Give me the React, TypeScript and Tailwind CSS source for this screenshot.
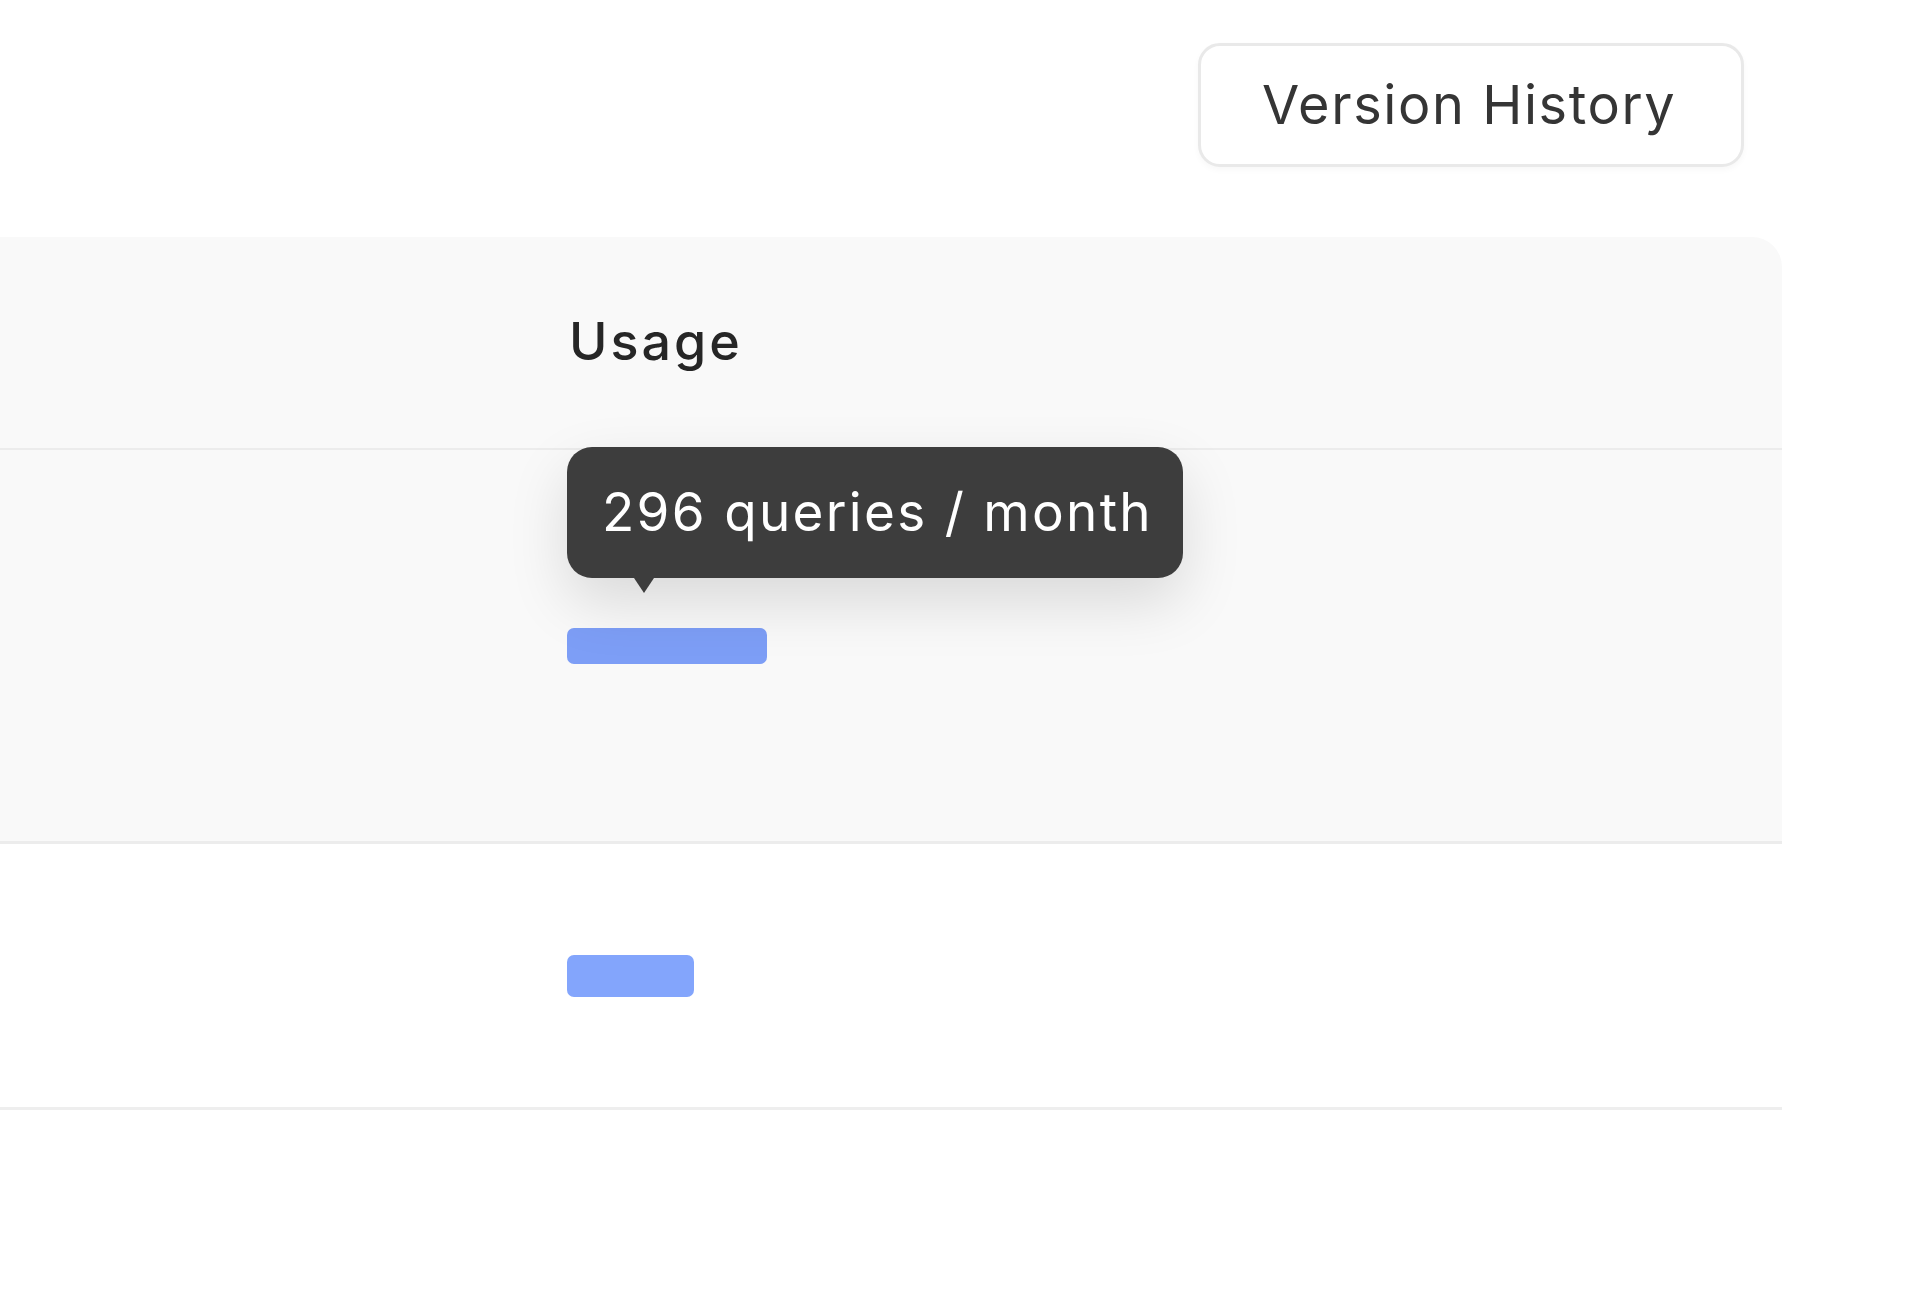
import React from 'react';

type Row = {
    id: string;
    width: number;
    height: number;
    color: string;
    tip?: string;
};

const rows: Row[] = [
    { id: 'a', width: 200, height: 36, color: '#7d9ef6', tip: '296 queries / month' },
    { id: 'b', width: 127, height: 42, color: '#83a5fc' },
];

const UsageBar: React.FC<{ row: Row }> = ({ row }) => (
    <div className="relative" style={{ width: row.width, height: row.height }}>
        <div className="w-full h-full rounded-[7px]" style={{ backgroundColor: row.color }} />
        {row.tip && (
            <div className="absolute left-0 bottom-[calc(100%+50px)]">
                <div className="relative">
                    <div className="h-[131px] w-[616px] flex items-center pl-[35px] rounded-[25px] bg-[#3d3d3d] text-white text-[53px] leading-none tracking-[2.3px] whitespace-nowrap shadow-[0_24px_60px_rgba(0,0,0,0.13)]">
                        {row.tip}
                    </div>
                    <div className="absolute left-[67px] top-full w-0 h-0 border-l-[10px] border-r-[10px] border-t-[15px] border-l-transparent border-r-transparent border-t-[#3d3d3d]" />
                </div>
            </div>
        )}
    </div>
);

export default function App() {
    return (
        <div className="w-[1920px] h-[1316px] bg-white overflow-hidden font-['Inter','Liberation_Sans',sans-serif]">
            {/* top actions */}
            <div className="flex justify-end pt-[43px] pr-[176px]">
                <button className="h-[124px] w-[546px] rounded-[22px] border-[3px] border-[#e9e9e9] bg-white text-[54px] leading-none text-[#353535] pl-[61px] text-left tracking-[1.6px] shadow-[0_3px_6px_rgba(0,0,0,0.03)]">
                    Version History
                </button>
            </div>

            {/* table */}
            <div className="mt-[70px] w-[1782px]">
                <div className="grid grid-cols-[567px_1fr] h-[213px] bg-[#f9f9f9] rounded-tr-[30px] border-b-2 border-[#ececec]">
                    <div />
                    <div className="flex items-center pb-[2px] pl-[2px] text-[52px] font-medium tracking-[3px] text-[#262626]">
                        Usage
                    </div>
                </div>
                {rows.map((row, i) => (
                    <div
                        key={row.id}
                        className={
                            i === 0
                                ? 'grid grid-cols-[567px_1fr] h-[394px] bg-[#f9f9f9] border-b-[3px] border-[#ececec]'
                                : 'grid grid-cols-[567px_1fr] h-[266px] bg-white border-b-[3px] border-[#eeeeee]'
                        }
                    >
                        <div />
                        <div className="flex items-center">
                            <UsageBar row={row} />
                        </div>
                    </div>
                ))}
            </div>
        </div>
    );
}
